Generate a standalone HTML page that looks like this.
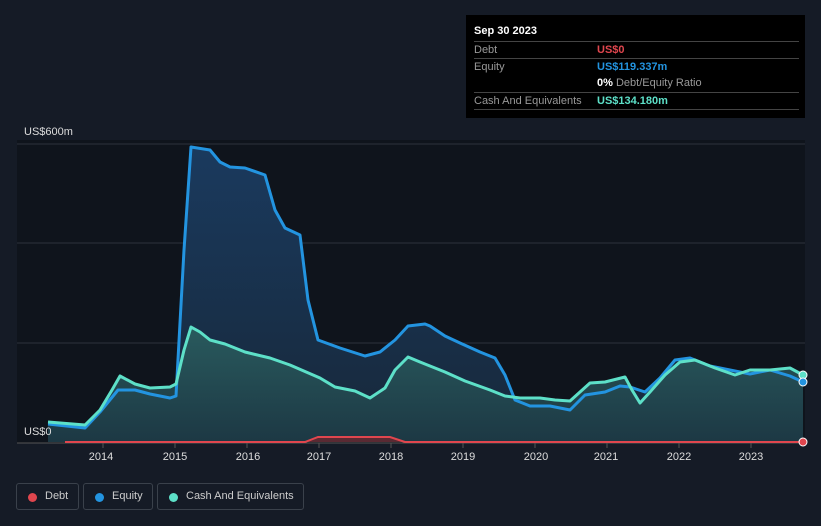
<!DOCTYPE html><html><head><style>
body{margin:0;width:821px;height:526px;background:#151b26;font-family:"Liberation Sans",sans-serif;overflow:hidden;position:relative}
.tt{position:absolute;left:466px;top:15px;width:339px;height:103px;background:#000;color:#fff;font-size:11px}
.row{position:absolute;left:8px;right:6px;height:17px;border-top:1px solid #444;color:#999;box-sizing:border-box;padding-top:2px}
.row span{position:absolute;left:123px;top:2px}
.lg{position:absolute;top:483px;height:27px;border:1px solid #3a414b;border-radius:3px;color:#ccc;font-size:11px;line-height:25px;box-sizing:border-box}
.lg i{position:absolute;left:11px;top:9px;width:9px;height:9px;border-radius:50%}
</style></head><body>
<svg width="821" height="526" style="position:absolute;left:0;top:0">
<rect x="17" y="140" width="788" height="303" fill="#0f141c"/>
<g stroke="#2c323b" stroke-width="1"><line x1="17" y1="144" x2="805" y2="144"/><line x1="17" y1="243" x2="805" y2="243"/><line x1="17" y1="343" x2="805" y2="343"/><line x1="17" y1="443" x2="805" y2="443" stroke="#555"/></g>
<defs><linearGradient id="ge" x1="0" y1="0" x2="0" y2="1"><stop offset="0" stop-color="#1a3a5e"/><stop offset="1" stop-color="#17283a"/></linearGradient>
<linearGradient id="gc" x1="0" y1="0" x2="0" y2="1"><stop offset="0" stop-color="#2b5f60"/><stop offset="1" stop-color="#1d3a45"/></linearGradient></defs>
<path d="M48,424 L85,428 L100,412 L118,390 L135,390 L150,394 L170,398 L176,396 L184,250 L191,147 L210,150 L220,162 L230,167 L245,168 L265,175 L275,210 L285,228 L300,235 L308,300 L318,340 L340,348 L365,356 L380,352 L395,340 L408,326 L425,324 L430,326 L445,336 L460,343 L480,352 L495,358 L505,375 L515,400 L530,406 L550,406 L570,410 L585,395 L605,392 L620,386 L630,387 L645,392 L660,378 L675,360 L690,358 L710,366 L730,370 L750,374 L770,370 L790,376 L803,382 L803,442 L48,442Z" fill="url(#ge)"/>
<path d="M48,422 L85,425 L100,410 L112,390 L120,376 L135,384 L150,388 L170,387 L176,384 L184,350 L191,327 L200,332 L210,340 L225,344 L245,352 L270,358 L290,365 L320,378 L335,387 L355,391 L370,398 L385,388 L395,370 L408,357 L420,362 L430,366 L445,372 L465,381 L490,390 L505,396 L520,398 L540,398 L555,400 L570,401 L580,392 L590,383 L605,382 L625,377 L632,390 L640,403 L650,392 L665,375 L680,362 L695,360 L715,368 L735,375 L750,370 L770,370 L790,368 L803,375 L803,442 L48,442Z" fill="url(#gc)" opacity="0.9"/>
<path d="M48,424 L85,428 L100,412 L118,390 L135,390 L150,394 L170,398 L176,396 L184,250 L191,147 L210,150 L220,162 L230,167 L245,168 L265,175 L275,210 L285,228 L300,235 L308,300 L318,340 L340,348 L365,356 L380,352 L395,340 L408,326 L425,324 L430,326 L445,336 L460,343 L480,352 L495,358 L505,375 L515,400 L530,406 L550,406 L570,410 L585,395 L605,392 L620,386 L630,387 L645,392 L660,378 L675,360 L690,358 L710,366 L730,370 L750,374 L770,370 L790,376 L803,382" fill="none" stroke="#2394e0" stroke-width="3" stroke-linejoin="round"/>
<path d="M48,422 L85,425 L100,410 L112,390 L120,376 L135,384 L150,388 L170,387 L176,384 L184,350 L191,327 L200,332 L210,340 L225,344 L245,352 L270,358 L290,365 L320,378 L335,387 L355,391 L370,398 L385,388 L395,370 L408,357 L420,362 L430,366 L445,372 L465,381 L490,390 L505,396 L520,398 L540,398 L555,400 L570,401 L580,392 L590,383 L605,382 L625,377 L632,390 L640,403 L650,392 L665,375 L680,362 L695,360 L715,368 L735,375 L750,370 L770,370 L790,368 L803,375" fill="none" stroke="#5de0c8" stroke-width="3" stroke-linejoin="round"/>
<path d="M305,442 L318,437 L390,437 L405,442Z" fill="#5a2a33"/>
<path d="M65,442 L305,442 L318,437 L390,437 L405,442 L803,442" fill="none" stroke="#e0464e" stroke-width="2"/>
<circle cx="803" cy="375" r="4" fill="#5de0c8" stroke="#fff"/><circle cx="803" cy="382" r="4" fill="#2394e0" stroke="#fff"/><circle cx="803" cy="442" r="4" fill="#e0464e" stroke="#fff"/>
<g stroke="#555"><line x1="103" y1="443" x2="103" y2="448"/><line x1="175" y1="443" x2="175" y2="448"/><line x1="247" y1="443" x2="247" y2="448"/><line x1="319" y1="443" x2="319" y2="448"/><line x1="391" y1="443" x2="391" y2="448"/><line x1="463" y1="443" x2="463" y2="448"/><line x1="535" y1="443" x2="535" y2="448"/><line x1="607" y1="443" x2="607" y2="448"/><line x1="679" y1="443" x2="679" y2="448"/><line x1="751" y1="443" x2="751" y2="448"/></g>
<g fill="#ddd" font-size="11" text-anchor="middle"><text x="101" y="460">2014</text><text x="175" y="460">2015</text><text x="248" y="460">2016</text><text x="319" y="460">2017</text><text x="391" y="460">2018</text><text x="463" y="460">2019</text><text x="536" y="460">2020</text><text x="606" y="460">2021</text><text x="679" y="460">2022</text><text x="751" y="460">2023</text></g>
<text x="24" y="135" fill="#ddd" font-size="11">US$600m</text>
<text x="24" y="435" fill="#ddd" font-size="11">US$0</text>
</svg>
<div class="tt">
<div style="position:absolute;left:8px;top:10px;font-weight:bold">Sep 30 2023</div>
<div class="row" style="top:26px">Debt<span style="color:#e0464e;font-weight:bold">US$0</span></div>
<div class="row" style="top:43px">Equity<span style="color:#2394e0;font-weight:bold">US$119.337m</span></div>
<div class="row" style="top:60px;border-top:none"><span style="color:#999"><b style="color:#fff">0%</b> Debt/Equity Ratio</span></div>
<div class="row" style="top:77px">Cash And Equivalents<span style="color:#5de0c8;font-weight:bold">US$134.180m</span></div>
<div class="row" style="top:94px;height:0"></div>
</div>
<div class="lg" style="left:16px;width:63px"><i style="background:#e0464e"></i><span style="margin-left:28px">Debt</span></div>
<div class="lg" style="left:83px;width:70px"><i style="background:#2394e0"></i><span style="margin-left:28px">Equity</span></div>
<div class="lg" style="left:157px;width:147px"><i style="background:#5de0c8"></i><span style="margin-left:28px">Cash And Equivalents</span></div>
</body></html>
